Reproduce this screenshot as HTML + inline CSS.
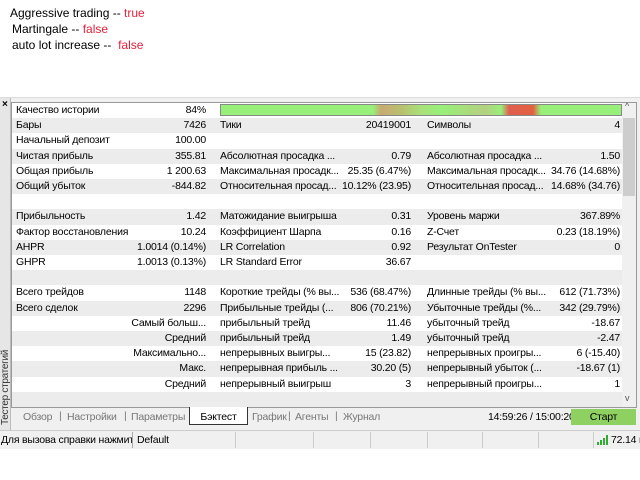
<!DOCTYPE html>
<html><head><meta charset="utf-8"><style>
*{margin:0;padding:0;box-sizing:border-box}
body{width:640px;height:480px;background:#fff;position:relative;overflow:hidden;font-family:"Liberation Sans",sans-serif;font-size:11px;color:#000}
.t{position:absolute;font-size:12px;white-space:pre}
.r{color:#e8203a}
.row{position:absolute;left:12px;width:610px;height:15.2px}
.g{background:#ececec}
.c{position:absolute;top:1px;white-space:nowrap;font-size:10.5px;line-height:13px;letter-spacing:-0.2px;overflow:hidden}
.rt{text-align:right}
</style></head><body>
<div class="t" style="left:10px;top:6px">Aggressive trading -- <span class="r">true</span></div>
<div class="t" style="left:12px;top:22px">Martingale -- <span class="r">false</span></div>
<div class="t" style="left:12px;top:38px">auto lot increase --  <span class="r">false</span></div>
<div style="position:absolute;left:0;top:97px;width:640px;height:1px;background:#dcdcdc"></div>
<div style="position:absolute;left:0;top:98px;width:640px;height:333px;background:#f0f0f0"></div>
<div style="position:absolute;left:0;top:98px;width:11px;height:333px;background:#e6e6e6;border-right:1px solid #bbb"></div>
<div style="position:absolute;left:2px;top:99px;font-size:10px;font-weight:bold">×</div>
<div style="position:absolute;left:-38px;top:376px;width:88px;height:10px;transform:rotate(-90deg);font-size:10px;line-height:10px;color:#333;white-space:nowrap;letter-spacing:-0.3px">Тестер стратегий</div>
<div style="position:absolute;left:11px;top:102px;width:626px;height:306px;background:#fff;border:1px solid #999"></div>
<div id="rows"></div>
<div style="position:absolute;left:622px;top:103px;width:14px;height:304px;background:#f0f0f0"></div>
<div style="position:absolute;left:623px;top:118px;width:12px;height:78px;background:#cdcdcd"></div>
<div style="position:absolute;left:625px;top:101px;font-size:9px;color:#555">^</div>
<div style="position:absolute;left:625px;top:393px;font-size:9px;color:#555">v</div>
<div style="position:absolute;left:220px;top:104px;width:402px;height:12px;border:1px solid #888;background:linear-gradient(90deg,#98f07a 0,#98f07a 38%,#c9a970 40%,#b8c070 45%,#a9e07a 50%,#98f07a 55%,#b4d080 66%,#98f07a 70%,#e06050 72%,#e26040 78%,#98f07a 80%,#98f07a 100%)"></div>
<div style="position:absolute;left:12px;top:408px;width:625px;height:18px;font-size:10.5px;letter-spacing:-0.2px;color:#777">
<span style="position:absolute;left:11px;top:3px">Обзор</span><span style="position:absolute;left:47px;top:2px">|</span>
<span style="position:absolute;left:55px;top:3px">Настройки</span><span style="position:absolute;left:112px;top:2px">|</span>
<span style="position:absolute;left:119px;top:3px">Параметры</span>
<span style="position:absolute;left:177px;top:-1px;width:59px;height:18px;background:#fff;border:1px solid #333;border-top:none;color:#000;text-align:center;padding-top:4px">Бэктест</span>
<span style="position:absolute;left:240px;top:3px">График</span><span style="position:absolute;left:276px;top:2px">|</span>
<span style="position:absolute;left:283px;top:3px">Агенты</span><span style="position:absolute;left:323px;top:2px">|</span>
<span style="position:absolute;left:331px;top:3px">Журнал</span>
<span style="position:absolute;left:476px;top:3px;color:#000">14:59:26 / 15:00:20</span>
<span style="position:absolute;left:559px;top:1px;width:65px;height:16px;background:#8fd160;color:#000;text-align:center;padding-top:2px">Старт</span>
</div>
<div style="position:absolute;left:0;top:430px;width:640px;height:1px;background:#ccc"></div>
<div style="position:absolute;left:0;top:431px;width:640px;height:18px;background:#f0f0f0;font-size:10.5px;letter-spacing:-0.2px">
<span style="position:absolute;left:1px;top:3px;width:131px;overflow:hidden;white-space:nowrap">Для вызова справки нажмите F1</span>
<span style="position:absolute;left:137px;top:3px">Default</span>
<span style="position:absolute;left:132px;top:1px;width:1px;height:16px;background:#aaa"></span>
<span style="position:absolute;left:235px;top:1px;width:1px;height:16px;background:#ccc"></span>
<span style="position:absolute;left:313px;top:1px;width:1px;height:16px;background:#ccc"></span>
<span style="position:absolute;left:370px;top:1px;width:1px;height:16px;background:#ccc"></span>
<span style="position:absolute;left:427px;top:1px;width:1px;height:16px;background:#ccc"></span>
<span style="position:absolute;left:482px;top:1px;width:1px;height:16px;background:#ccc"></span>
<span style="position:absolute;left:538px;top:1px;width:1px;height:16px;background:#ccc"></span>
<span style="position:absolute;left:593px;top:1px;width:1px;height:16px;background:#ccc"></span>
<svg style="position:absolute;left:597px;top:4px" width="12" height="10"><rect x="0" y="7" width="2" height="3" fill="#3a3"/><rect x="3" y="5" width="2" height="5" fill="#3a3"/><rect x="6" y="3" width="2" height="7" fill="#3a3"/><rect x="9" y="0" width="2" height="10" fill="#3a3"/></svg>
<span style="position:absolute;left:611px;top:3px;white-space:nowrap">72.14 m</span>
</div>
<script>
var d=[
["Качество истории","84%","","","",""],
["Бары","7426","Тики","20419001","Символы","4"],
["Начальный депозит","100.00","","","",""],
["Чистая прибыль","355.81","Абсолютная просадка ...","0.79","Абсолютная просадка ...","1.50"],
["Общая прибыль","1 200.63","Максимальная просадк...","25.35 (6.47%)","Максимальная просадк...","34.76 (14.68%)"],
["Общий убыток","-844.82","Относительная просад...","10.12% (23.95)","Относительная просад...","14.68% (34.76)"],
["","","","","",""],
["Прибыльность","1.42","Матожидание выигрыша","0.31","Уровень маржи","367.89%"],
["Фактор восстановления","10.24","Коэффициент Шарпа","0.16","Z-Счет","0.23 (18.19%)"],
["AHPR","1.0014 (0.14%)","LR Correlation","0.92","Результат OnTester","0"],
["GHPR","1.0013 (0.13%)","LR Standard Error","36.67","",""],
["","","","","",""],
["Всего трейдов","1148","Короткие трейды (% вы...","536 (68.47%)","Длинные трейды (% вы...","612 (71.73%)"],
["Всего сделок","2296","Прибыльные трейды (...","806 (70.21%)","Убыточные трейды (%...","342 (29.79%)"],
["","Самый больш...","прибыльный трейд","11.46","убыточный трейд","-18.67"],
["","Средний","прибыльный трейд","1.49","убыточный трейд","-2.47"],
["","Максимально...","непрерывных выигры...","15 (23.82)","непрерывных проигры...","6 (-15.40)"],
["","Макс.","непрерывная прибыль ...","30.20 (5)","непрерывный убыток (...","-18.67 (1)"],
["","Средний","непрерывный выигрыш","3","непрерывный проигры...","1"],
["","","","","",""]];
var h="";
for(var i=0;i<d.length;i++){var r=d[i];
h+='<div class="row'+(i%2?' g':'')+'" style="top:'+(103+i*15.2)+'px">'+
'<span class="c" style="left:4px;width:150px">'+r[0]+'</span>'+
'<span class="c rt" style="right:416px">'+r[1]+'</span>'+
(i==0?'':'<span class="c" style="left:208px;width:128px">'+r[2]+'</span>')+
'<span class="c rt" style="right:211px">'+r[3]+'</span>'+
'<span class="c" style="left:415px;width:122px">'+r[4]+'</span>'+
'<span class="c rt" style="right:2px">'+r[5]+'</span></div>';}
document.getElementById("rows").outerHTML=h;
</script>
</body></html>
